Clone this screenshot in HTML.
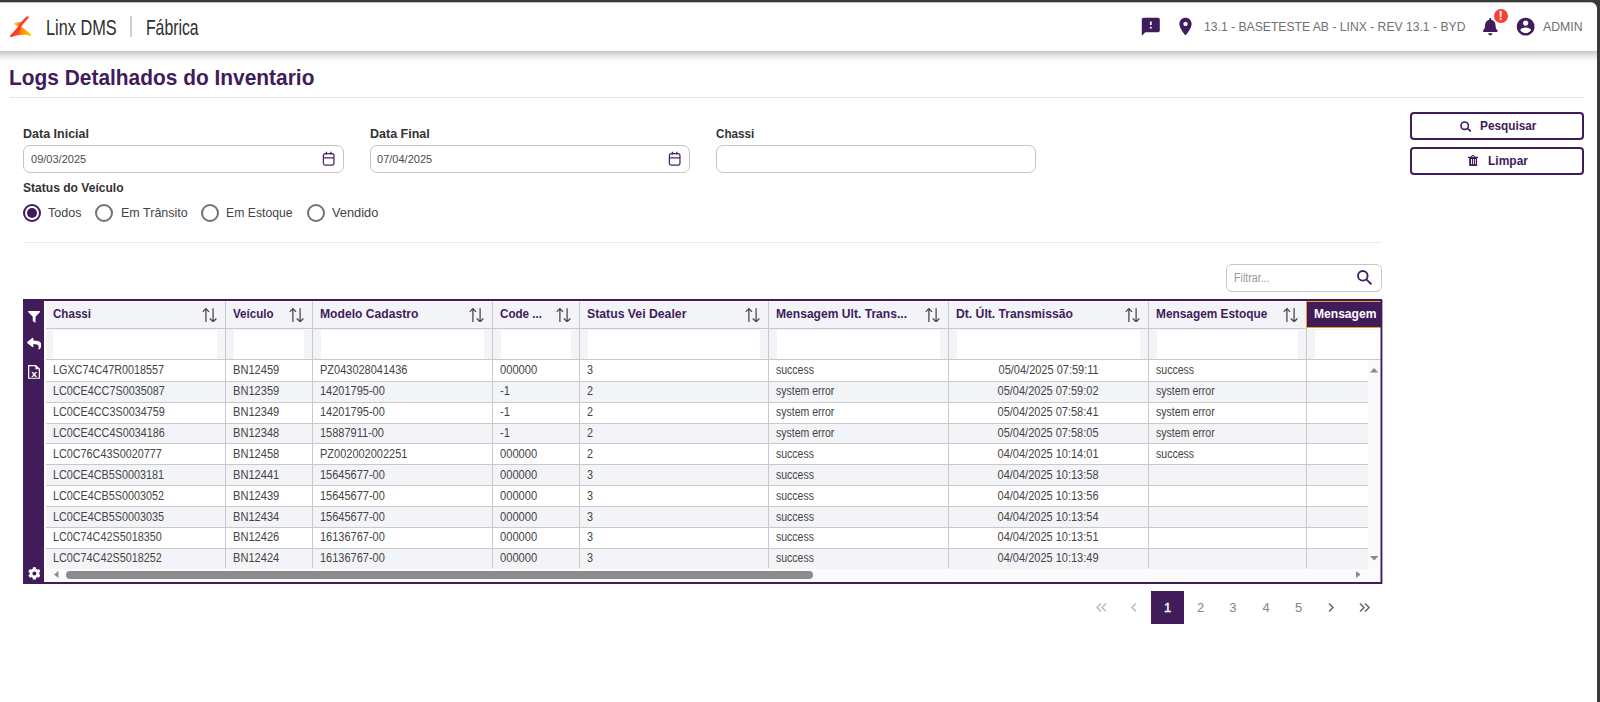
<!DOCTYPE html><html lang="pt-BR"><head><meta charset="utf-8"><title>Logs Detalhados do Inventario</title><style>*{box-sizing:border-box;margin:0;padding:0}
html,body{width:1600px;height:702px;overflow:hidden;background:#fff}
body{font-family:"Liberation Sans",sans-serif;position:relative;color:#444}
.abs{position:absolute}
.frame-top{position:absolute;left:0;top:0;width:1600px;height:3px;background:linear-gradient(#3a3a3a 0,#3a3a3a 66.6%,rgba(58,58,58,.3) 66.7%);z-index:50}
.frame-right{position:absolute;left:1597px;top:0;width:3px;height:702px;background:#3a3a3a;z-index:50}
.frame-corner{position:absolute;left:1590px;top:2px;width:7px;height:7px;z-index:49;background:radial-gradient(circle at 0 100%,rgba(58,58,58,0) 6.500px,#3a3a3a 7.500px)}
.hdr{position:absolute;left:0;top:2px;width:1597px;height:49px;background:#fff;z-index:10}
.hshadow{position:absolute;left:0;top:51px;width:1597px;height:11.500px;background:linear-gradient(#c9c9c9 0,#cdcdcd 8%,#d6d6d6 20%,#e5e5e5 38%,#f2f2f2 60%,#fafafa 80%,#fff 100%);z-index:9}
.sx{display:inline-block;transform-origin:0 50%;white-space:nowrap}
.brand{position:absolute;top:13px;font-size:22px;line-height:26px;color:#2e2e2e;white-space:nowrap}
.sep{position:absolute;left:130px;top:14px;width:2px;height:21px;background:#cfcfcf}
.hinfo{position:absolute;top:17px;font-size:13px;line-height:16px;color:#707070;white-space:nowrap}
.title{position:absolute;left:9px;top:66px;font-size:22px;line-height:24px;transform:scaleX(.95);transform-origin:0 50%;font-weight:bold;color:#401c5b;white-space:nowrap}
.hr1{position:absolute;left:10px;top:97px;width:1574px;height:1px;background:#e6e6e6}
.hr2{position:absolute;left:23px;top:242px;width:1359px;height:1px;background:#ececec}
.lbl{position:absolute;font-size:12.5px;line-height:14px;font-weight:bold;color:#333;white-space:nowrap}
.inp{position:absolute;top:145px;width:321px;height:28px;border:1px solid #c4c4c4;border-radius:7px;background:#fff}
.inp span{position:absolute;left:6.800px;top:6px;font-size:11.5px;line-height:14px;color:#4c4c4c;transform:scaleX(.958);transform-origin:0 50%}
.inp svg{position:absolute;right:8px;top:5px;width:13px;height:15px}
.radio{position:absolute;top:204px;width:18px;height:18px;border:2px solid #727272;border-radius:50%;background:#fff}
.radio.on{border-color:#401c5b}
.radio.on::after{content:"";position:absolute;left:2px;top:2px;width:10px;height:10px;border-radius:50%;background:#401c5b}
.rl{position:absolute;top:205px;font-size:13px;line-height:16px;color:#444;white-space:nowrap;transform:scaleX(.963);transform-origin:0 50%}
.sq{transform:scaleX(.965);transform-origin:0 50%}
.btn{position:absolute;left:1410px;width:174px;height:28px;border:2px solid #401c5b;border-radius:4px;background:#fff;color:#401c5b;font-weight:bold;font-size:12.5px;white-space:nowrap}
.btn svg{position:absolute}
.btn span{position:absolute;top:4.500px;line-height:14px;transform-origin:0 50%}
.filt{position:absolute;left:1226px;top:264px;width:156px;height:28px;border:1px solid #c6c6c6;border-radius:6px;background:#fff}
.filt span{position:absolute;left:6.500px;top:6px;font-size:12.5px;line-height:14px;color:#999;transform:scaleX(.853);transform-origin:0 50%}
.filt svg{position:absolute;left:129px;top:4.300px;width:17px;height:17px}
.grid{position:absolute;left:23px;top:299px;width:1358px;height:285px;background:#fff;border-top:2px solid #401c5b;border-bottom:2px solid #401c5b;overflow:hidden}
.grid>*{margin-top:-2px}
.side{position:absolute;left:0;top:0;width:21px;height:285px;background:#401c5b}
.side svg{position:absolute}
.hc{position:absolute;top:2px;height:28px;border-top:1px solid #fdfdfe;background:#f3f4f8;border-right:1px solid #c9c9c9;border-bottom:1px solid #c9c9c9;overflow:hidden}
.hc .ht{position:absolute;top:5px;font-size:12.5px;line-height:14px;font-weight:bold;color:#401c5b;white-space:nowrap;transform-origin:0 50%}
.hc .sort{position:absolute;right:7.400px;top:5.800px;width:16px;height:14.400px;fill:none;stroke:#4a4a4a;stroke-width:1.300}
.hc.last{background:#401c5b;border:1px solid #f0a020;border-right:none;margin-left:-1px;height:27px;top:2px}
.hc.last .ht{color:#fff;margin-left:0;top:5px}
.fc{position:absolute;top:30px;height:31px;background:#f3f4f8;border-right:1px solid #c9c9c9;border-bottom:1px solid #c9c9c9}
.fi{position:absolute;right:8px;top:1px;bottom:.5px;background:#fff}
.row{position:absolute;left:0;width:1345px;overflow:hidden;height:21px}
.row.alt .c{background:#f3f4f8}
.c{position:absolute;top:0;height:100%;border-right:1px solid #c9c9c9;border-bottom:1px solid #c9c9c9;background:#fff;font-size:12px;color:#444;white-space:nowrap;overflow:hidden}
.c span{display:inline-block;transform-origin:0 50%}
.c.ctr{text-align:center}
.c.ctr span{transform-origin:50% 50%}
.row.lastr .c{border-bottom-color:transparent}
.pg{position:absolute;top:590.500px;width:33px;height:33px;line-height:33px;text-align:center;font-size:13px;color:#858585}
.pg.on{background:#401c5b;color:#fff;-webkit-text-stroke:.35px #fff}
.pg svg{position:absolute;left:9px;top:10px;width:14px;height:13px;fill:none;stroke-width:1.5}
.rb0{position:absolute;left:1380px;top:301px;width:1px;height:281px;background:rgba(64,28,91,.5)}
.rb1{position:absolute;left:1381px;top:299px;width:1px;height:285px;background:#401c5b}
.rb2{position:absolute;left:1382px;top:300px;width:1px;height:284px;background:rgba(64,28,91,.4)}
</style></head><body>
<div class="frame-top"></div><div class="frame-right"></div><div class="frame-corner"></div>
<div class="hshadow"></div>
<div class="hdr">
<svg class="abs" style="left:5px;top:8px" width="35" height="32" viewBox="0 0 768 702"><defs><linearGradient id="lgA" gradientUnits="userSpaceOnUse" x1="215" y1="0" x2="350" y2="0"><stop offset="0" stop-color="#ffc400"/><stop offset=".45" stop-color="#ffa600"/><stop offset="1" stop-color="#ff5a1a"/></linearGradient><linearGradient id="lgB" gradientUnits="userSpaceOnUse" x1="280" y1="0" x2="575" y2="0"><stop offset="0" stop-color="#ff4a20"/><stop offset=".3" stop-color="#ff8a00"/><stop offset=".8" stop-color="#ffbe00"/><stop offset="1" stop-color="#ffd000"/></linearGradient></defs>
<path d="M210 288 C250 274 300 272 352 258 L318 382 C284 368 240 340 214 318 C202 308 200 293 210 288 Z" fill="url(#lgA)"/>
<path d="M350 368 C420 412 500 470 566 528 C580 542 578 566 560 570 C470 536 330 520 130 594 L300 420 Z" fill="url(#lgB)"/>
<path d="M466 150 C490 124 534 142 518 170 C474 232 398 290 356 368 C340 440 300 500 200 564 C170 582 140 596 124 590 C102 580 110 556 122 546 C190 480 250 410 298 350 C330 290 400 216 466 150 Z" fill="#ff3b26"/></svg>
<div class="brand" style="left:45.500px"><span class="sx" style="transform:scaleX(.742)">Linx DMS</span></div>
<div class="sep"></div>
<div class="brand" style="left:146px"><span class="sx" style="transform:scaleX(.716)">Fábrica</span></div>
<svg class="abs" style="left:1140.300px;top:14.100px" width="21.600" height="21.600" viewBox="0 0 24 24"><path fill="#401c5b" d="M20 2H4c-1.100 0-2 .9-2 2v18l4-4h14c1.100 0 2-.9 2-2V4c0-1.100-.9-2-2-2zm-7 12h-2v-2h2v2zm0-4h-2V6h2v4z"/></svg>
<svg class="abs" style="left:1175.400px;top:14.150px" width="21" height="21" viewBox="0 0 24 24"><path fill="#401c5b" d="M12 2C8.130 2 5 5.130 5 9c0 5.250 7 13 7 13s7-7.750 7-13c0-3.870-3.130-7-7-7zm0 9.500c-1.380 0-2.500-1.120-2.500-2.500s1.120-2.500 2.500-2.500 2.500 1.120 2.500 2.500-1.120 2.500-2.500 2.500z"/></svg>
<div class="hinfo" style="left:1204px"><span class="sx" style="transform:scaleX(.935)">13.1 - BASETESTE AB - LINX - REV 13.1 - BYD</span></div>
<svg class="abs" style="left:1483px;top:16.400px" width="14.600" height="17.300" viewBox="0 0 448 512" preserveAspectRatio="none"><path fill="#401c5b" d="M224 512c35.320 0 63.970-28.650 63.970-64H160.030c0 35.350 28.650 64 63.970 64zm215.390-149.710c-19.320-20.760-55.470-51.990-55.470-154.290 0-77.700-54.480-139.900-127.940-155.160V32c0-17.670-14.320-32-31.980-32s-31.980 14.330-31.980 32v20.840C118.560 68.100 64.080 130.300 64.080 208c0 102.300-36.150 133.530-55.470 154.290-6 6.450-8.660 14.160-8.610 21.710.110 16.400 12.980 32 32.100 32h383.800c19.120 0 32-15.600 32.100-32 .05-7.550-2.610-15.270-8.610-21.710z"/></svg>
<div class="abs" style="left:1493.700px;top:6.900px;width:14.100px;height:14.100px;border-radius:50%;background:#f44336;color:#fff;font-size:12px;font-weight:bold;line-height:14px;text-align:center">!</div>
<svg class="abs" style="left:1514.700px;top:14px" width="21.300" height="21.300" viewBox="0 0 24 24"><path fill="#401c5b" d="M12 2C6.480 2 2 6.480 2 12s4.480 10 10 10 10-4.480 10-10S17.520 2 12 2zm0 3c1.660 0 3 1.340 3 3s-1.340 3-3 3-3-1.340-3-3 1.340-3 3-3zm0 14.200c-2.500 0-4.710-1.280-6-3.220.030-1.990 4-3.080 6-3.080 1.990 0 5.970 1.090 6 3.080-1.290 1.940-3.500 3.220-6 3.220z"/></svg>
<div class="hinfo" style="left:1542.500px"><span class="sx" style="transform:scaleX(.945)">ADMIN</span></div>
</div>
<div class="title">Logs Detalhados do Inventario</div>
<div class="hr1"></div>
<div class="lbl" style="left:23px;top:127px">Data Inicial</div>
<div class="lbl" style="left:370px;top:127px">Data Final</div>
<div class="lbl" style="left:716px;top:127px;transform:scaleX(.93);transform-origin:0 50%">Chassi</div>
<div class="inp" style="left:23px"><span>09/03/2025</span><svg viewBox="0 0 13 15"><path fill="none" stroke="#46256a" stroke-width="1.250" d="M3.200 2.700h6.950a1.800 1.800 0 0 1 1.800 1.800v7.700a1.800 1.800 0 0 1-1.800 1.800H3.200a1.800 1.800 0 0 1-1.800-1.800V4.500a1.800 1.800 0 0 1 1.800-1.800zM1.400 6.800h10.550M4.400 .7v3M8.900 .7v3"/></svg></div>
<div class="inp" style="left:369.500px;width:320.500px"><span>07/04/2025</span><svg viewBox="0 0 13 15"><path fill="none" stroke="#46256a" stroke-width="1.250" d="M3.200 2.700h6.950a1.800 1.800 0 0 1 1.800 1.800v7.700a1.800 1.800 0 0 1-1.800 1.800H3.200a1.800 1.800 0 0 1-1.800-1.800V4.500a1.800 1.800 0 0 1 1.800-1.800zM1.400 6.800h10.550M4.400 .7v3M8.900 .7v3"/></svg></div>
<div class="inp" style="left:716px;width:320px"></div>
<div class="lbl sq" style="left:23px;top:180.500px">Status do Veículo</div>
<div class="radio on" style="left:23px"></div><div class="rl" style="left:48px">Todos</div>
<div class="radio" style="left:95px"></div><div class="rl" style="left:121px">Em Trânsito</div>
<div class="radio" style="left:201px"></div><div class="rl" style="left:226px;transform:scaleX(.94)">Em Estoque</div>
<div class="radio" style="left:307px"></div><div class="rl" style="left:331.500px;transform:scaleX(.985)">Vendido</div>
<div class="hr2"></div>
<div class="btn" style="top:112px"><svg style="left:47.600px;top:6.800px" width="11.600" height="11" viewBox="0 0 11.600 11"><circle cx="4.700" cy="4.700" r="3.700" fill="none" stroke="#401c5b" stroke-width="1.600"/><path d="M7.400 7.400l3.600 3" stroke="#401c5b" stroke-width="1.700"/></svg><span style="left:67.500px;transform:scaleX(.945)">Pesquisar</span></div>
<div class="btn" style="top:147px"><svg style="left:56px;top:5.800px" width="10" height="11.200" viewBox="0 0 10 11.200"><path fill="#401c5b" fill-rule="evenodd" d="M0 1.700h10v1.300H0zM1.200 3h7.900v7.200a1 1 0 0 1-1 1H2.200a1 1 0 0 1-1-1zM3 4v5.200h.9V4zm2.100 0v5.200H6V4zm2 0v5.200h.8V4z"/><path fill="none" stroke="#401c5b" stroke-width="1" d="M3.300 1.900c0-1.900 3.400-1.900 3.400 0"/></svg><span style="left:75.500px;transform:scaleX(.96)">Limpar</span></div>
<div class="filt"><span>Filtrar...</span><svg viewBox="0 0 17 17"><circle cx="6.800" cy="6.800" r="4.800" fill="none" stroke="#401c5b" stroke-width="1.800"/><path d="M10.400 10.400l5 5" stroke="#401c5b" stroke-width="1.900"/></svg></div>

<div class="grid">
<div class="side"><svg style="left:4.700px;top:12.300px" width="12.300" height="11.500" viewBox="0 0 14 13" preserveAspectRatio="none"><path fill="#fff" d="M.6 0h12.800c.5 0 .8.600.4 1L8.600 6.500V12.400c0 .5-.5.700-.9.500l-2-1.400a.7.700 0 0 1-.3-.6V6.500L.2 1C-.2.600.1 0 .6 0z"/></svg>
<svg style="left:3.800px;top:38.200px" width="14.500" height="13.400" viewBox="0 0 512 512" preserveAspectRatio="none"><path fill="#fff" d="M8.310 189.900l176-152c15.410-13.300 39.690-2.500 39.690 18.200v80.050c160.600 1.800 288 34 288 186.300 0 61.440-39.590 122.300-83.340 154.100-13.660 9.900-33.110-2.500-28.080-18.600 45.340-145-21.500-183.500-176.600-185.800v87.920c0 20.700-24.310 31.450-39.690 18.160l-176-152c-11.070-9.540-11.080-26.730.02-36.330z"/></svg>
<svg style="left:5.200px;top:66.300px" width="12" height="13.800" viewBox="0 0 13 16" preserveAspectRatio="none"><path fill="none" stroke="#fff" stroke-width="1.300" d="M.7.700h7.600l4 4v10.600H.7z"/><path fill="#fff" d="M8 0l5 5H8z"/><text x="6.600" y="14" font-family="Liberation Sans,sans-serif" font-weight="bold" font-size="11.500" fill="#fff" text-anchor="middle">x</text></svg>
<svg style="left:4.700px;top:267.800px" width="12.800" height="12.800" viewBox="0 0 512 512"><path fill="#fff" d="M487.400 315.700l-42.600-24.600c4.300-23.200 4.300-47 0-70.200l42.600-24.600c4.900-2.800 7.100-8.600 5.500-14-11.100-35.600-30-67.800-54.700-94.600-3.800-4.100-10-5.100-14.800-2.300L380.800 110c-17.900-15.400-38.500-27.300-60.800-35.100V25.800c0-5.600-3.900-10.500-9.400-11.700-36.700-8.200-74.300-7.800-109.200 0-5.500 1.200-9.400 6.100-9.400 11.700V75c-22.200 7.900-42.800 19.800-60.800 35.100L88.700 85.500c-4.900-2.800-11-1.900-14.800 2.300-24.700 26.700-43.600 58.900-54.700 94.600-1.700 5.400.6 11.200 5.500 14L67.300 221c-4.300 23.200-4.300 47 0 70.200l-42.600 24.600c-4.900 2.800-7.100 8.600-5.500 14 11.100 35.600 30 67.800 54.700 94.600 3.800 4.100 10 5.100 14.800 2.300l42.600-24.600c17.900 15.400 38.500 27.300 60.800 35.100v49.200c0 5.600 3.900 10.500 9.400 11.700 36.700 8.200 74.300 7.800 109.200 0 5.500-1.200 9.400-6.100 9.400-11.700v-49.200c22.200-7.900 42.800-19.800 60.800-35.100l42.600 24.600c4.900 2.800 11 1.900 14.800-2.300 24.700-26.700 43.600-58.900 54.700-94.600 1.500-5.500-.7-11.300-5.600-14.100zM256 336c-44.100 0-80-35.900-80-80s35.900-80 80-80 80 35.900 80 80-35.900 80-80 80z"/></svg>
</div>
<div class="hc" style="left:23px;width:180px"><span class="ht" style="left:7px;transform:scaleX(0.927)">Chassi</span><svg class="sort" viewBox="0 0 16 14.4"><path d="M3.900 14.200V.7M.8 3.900L3.900 .6l3.100 3.300M11.100 .3V13.700M7.800 10.500l3.300 3.300 3.300-3.300"/></svg></div>
<div class="fc" style="left:23px;width:180px"><div class="fi" style="left:7px"></div></div>
<div class="hc" style="left:203px;width:87px"><span class="ht" style="left:7px;transform:scaleX(0.926)">Veículo</span><svg class="sort" viewBox="0 0 16 14.4"><path d="M3.900 14.200V.7M.8 3.900L3.900 .6l3.100 3.300M11.100 .3V13.700M7.800 10.500l3.300 3.300 3.300-3.300"/></svg></div>
<div class="fc" style="left:203px;width:87px"><div class="fi" style="left:8px"></div></div>
<div class="hc" style="left:290px;width:180px"><span class="ht" style="left:7px;transform:scaleX(0.97)">Modelo Cadastro</span><svg class="sort" viewBox="0 0 16 14.4"><path d="M3.900 14.200V.7M.8 3.900L3.900 .6l3.100 3.300M11.100 .3V13.700M7.800 10.500l3.300 3.300 3.300-3.300"/></svg></div>
<div class="fc" style="left:290px;width:180px"><div class="fi" style="left:8px"></div></div>
<div class="hc" style="left:470px;width:87px"><span class="ht" style="left:7px;transform:scaleX(0.928)">Code ...</span><svg class="sort" viewBox="0 0 16 14.4"><path d="M3.900 14.200V.7M.8 3.900L3.900 .6l3.100 3.300M11.100 .3V13.700M7.800 10.500l3.300 3.300 3.300-3.300"/></svg></div>
<div class="fc" style="left:470px;width:87px"><div class="fi" style="left:8px"></div></div>
<div class="hc" style="left:557px;width:189px"><span class="ht" style="left:7px;transform:scaleX(0.98)">Status Vei Dealer</span><svg class="sort" viewBox="0 0 16 14.4"><path d="M3.900 14.200V.7M.8 3.900L3.900 .6l3.100 3.300M11.100 .3V13.700M7.800 10.500l3.300 3.300 3.300-3.300"/></svg></div>
<div class="fc" style="left:557px;width:189px"><div class="fi" style="left:8px"></div></div>
<div class="hc" style="left:746px;width:180px"><span class="ht" style="left:7px;transform:scaleX(0.967)">Mensagem Ult. Trans...</span><svg class="sort" viewBox="0 0 16 14.4"><path d="M3.900 14.200V.7M.8 3.900L3.900 .6l3.100 3.300M11.100 .3V13.700M7.800 10.500l3.300 3.300 3.300-3.300"/></svg></div>
<div class="fc" style="left:746px;width:180px"><div class="fi" style="left:8px"></div></div>
<div class="hc" style="left:926px;width:200px"><span class="ht" style="left:7px;transform:scaleX(0.973)">Dt. Últ. Transmissão</span><svg class="sort" viewBox="0 0 16 14.4"><path d="M3.900 14.200V.7M.8 3.900L3.900 .6l3.100 3.300M11.100 .3V13.700M7.800 10.500l3.300 3.300 3.300-3.300"/></svg></div>
<div class="fc" style="left:926px;width:200px"><div class="fi" style="left:8px"></div></div>
<div class="hc" style="left:1126px;width:158px"><span class="ht" style="left:7px;transform:scaleX(0.949)">Mensagem Estoque</span><svg class="sort" viewBox="0 0 16 14.4"><path d="M3.900 14.200V.7M.8 3.900L3.900 .6l3.100 3.300M11.100 .3V13.700M7.800 10.500l3.300 3.300 3.300-3.300"/></svg></div>
<div class="fc" style="left:1126px;width:158px"><div class="fi" style="left:8px"></div></div>
<div class="hc last" style="left:1284px;width:150px"><span class="ht" style="left:7px;transform:scaleX(0.966)">Mensagem</span></div>
<div class="fc" style="left:1284px;width:150px"><div class="fi" style="left:8px"></div></div>
<div class="row" style="top:61px;height:22px;line-height:21px">
<div class="c" style="left:23px;width:180px"><span style="margin-left:7px;transform:scaleX(0.9)">LGXC74C47R0018557</span></div>
<div class="c" style="left:203px;width:87px"><span style="margin-left:7px;transform:scaleX(0.925)">BN12459</span></div>
<div class="c" style="left:290px;width:180px"><span style="margin-left:7px;transform:scaleX(0.916)">PZ043028041436</span></div>
<div class="c" style="left:470px;width:87px"><span style="margin-left:7px;transform:scaleX(0.93)">000000</span></div>
<div class="c" style="left:557px;width:189px"><span style="margin-left:7px;transform:scaleX(0.9)">3</span></div>
<div class="c" style="left:746px;width:180px"><span style="margin-left:7px;transform:scaleX(0.875)">success</span></div>
<div class="c ctr" style="left:926px;width:200px"><span style="transform:scaleX(0.917)">05/04/2025 07:59:11</span></div>
<div class="c" style="left:1126px;width:158px"><span style="margin-left:7px;transform:scaleX(0.88)">success</span></div>
<div class="c" style="left:1284px;width:150px"><span style="margin-left:7px;transform:scaleX(0.9)"></span></div>
</div>
<div class="row alt" style="top:83px;height:21px;line-height:18px">
<div class="c" style="left:23px;width:180px"><span style="margin-left:7px;transform:scaleX(0.9)">LC0CE4CC7S0035087</span></div>
<div class="c" style="left:203px;width:87px"><span style="margin-left:7px;transform:scaleX(0.925)">BN12359</span></div>
<div class="c" style="left:290px;width:180px"><span style="margin-left:7px;transform:scaleX(0.916)">14201795-00</span></div>
<div class="c" style="left:470px;width:87px"><span style="margin-left:7px;transform:scaleX(0.93)">-1</span></div>
<div class="c" style="left:557px;width:189px"><span style="margin-left:7px;transform:scaleX(0.9)">2</span></div>
<div class="c" style="left:746px;width:180px"><span style="margin-left:7px;transform:scaleX(0.875)">system error</span></div>
<div class="c ctr" style="left:926px;width:200px"><span style="transform:scaleX(0.917)">05/04/2025 07:59:02</span></div>
<div class="c" style="left:1126px;width:158px"><span style="margin-left:7px;transform:scaleX(0.88)">system error</span></div>
<div class="c" style="left:1284px;width:150px"><span style="margin-left:7px;transform:scaleX(0.9)"></span></div>
</div>
<div class="row" style="top:104px;height:21px;line-height:18px">
<div class="c" style="left:23px;width:180px"><span style="margin-left:7px;transform:scaleX(0.9)">LC0CE4CC3S0034759</span></div>
<div class="c" style="left:203px;width:87px"><span style="margin-left:7px;transform:scaleX(0.925)">BN12349</span></div>
<div class="c" style="left:290px;width:180px"><span style="margin-left:7px;transform:scaleX(0.916)">14201795-00</span></div>
<div class="c" style="left:470px;width:87px"><span style="margin-left:7px;transform:scaleX(0.93)">-1</span></div>
<div class="c" style="left:557px;width:189px"><span style="margin-left:7px;transform:scaleX(0.9)">2</span></div>
<div class="c" style="left:746px;width:180px"><span style="margin-left:7px;transform:scaleX(0.875)">system error</span></div>
<div class="c ctr" style="left:926px;width:200px"><span style="transform:scaleX(0.917)">05/04/2025 07:58:41</span></div>
<div class="c" style="left:1126px;width:158px"><span style="margin-left:7px;transform:scaleX(0.88)">system error</span></div>
<div class="c" style="left:1284px;width:150px"><span style="margin-left:7px;transform:scaleX(0.9)"></span></div>
</div>
<div class="row alt" style="top:125px;height:20px;line-height:19px">
<div class="c" style="left:23px;width:180px"><span style="margin-left:7px;transform:scaleX(0.9)">LC0CE4CC4S0034186</span></div>
<div class="c" style="left:203px;width:87px"><span style="margin-left:7px;transform:scaleX(0.925)">BN12348</span></div>
<div class="c" style="left:290px;width:180px"><span style="margin-left:7px;transform:scaleX(0.916)">15887911-00</span></div>
<div class="c" style="left:470px;width:87px"><span style="margin-left:7px;transform:scaleX(0.93)">-1</span></div>
<div class="c" style="left:557px;width:189px"><span style="margin-left:7px;transform:scaleX(0.9)">2</span></div>
<div class="c" style="left:746px;width:180px"><span style="margin-left:7px;transform:scaleX(0.875)">system error</span></div>
<div class="c ctr" style="left:926px;width:200px"><span style="transform:scaleX(0.917)">05/04/2025 07:58:05</span></div>
<div class="c" style="left:1126px;width:158px"><span style="margin-left:7px;transform:scaleX(0.88)">system error</span></div>
<div class="c" style="left:1284px;width:150px"><span style="margin-left:7px;transform:scaleX(0.9)"></span></div>
</div>
<div class="row" style="top:145px;height:21px;line-height:20px">
<div class="c" style="left:23px;width:180px"><span style="margin-left:7px;transform:scaleX(0.9)">LC0C76C43S0020777</span></div>
<div class="c" style="left:203px;width:87px"><span style="margin-left:7px;transform:scaleX(0.925)">BN12458</span></div>
<div class="c" style="left:290px;width:180px"><span style="margin-left:7px;transform:scaleX(0.916)">PZ002002002251</span></div>
<div class="c" style="left:470px;width:87px"><span style="margin-left:7px;transform:scaleX(0.93)">000000</span></div>
<div class="c" style="left:557px;width:189px"><span style="margin-left:7px;transform:scaleX(0.9)">2</span></div>
<div class="c" style="left:746px;width:180px"><span style="margin-left:7px;transform:scaleX(0.875)">success</span></div>
<div class="c ctr" style="left:926px;width:200px"><span style="transform:scaleX(0.917)">04/04/2025 10:14:01</span></div>
<div class="c" style="left:1126px;width:158px"><span style="margin-left:7px;transform:scaleX(0.88)">success</span></div>
<div class="c" style="left:1284px;width:150px"><span style="margin-left:7px;transform:scaleX(0.9)"></span></div>
</div>
<div class="row alt" style="top:166px;height:21px;line-height:20px">
<div class="c" style="left:23px;width:180px"><span style="margin-left:7px;transform:scaleX(0.9)">LC0CE4CB5S0003181</span></div>
<div class="c" style="left:203px;width:87px"><span style="margin-left:7px;transform:scaleX(0.925)">BN12441</span></div>
<div class="c" style="left:290px;width:180px"><span style="margin-left:7px;transform:scaleX(0.916)">15645677-00</span></div>
<div class="c" style="left:470px;width:87px"><span style="margin-left:7px;transform:scaleX(0.93)">000000</span></div>
<div class="c" style="left:557px;width:189px"><span style="margin-left:7px;transform:scaleX(0.9)">3</span></div>
<div class="c" style="left:746px;width:180px"><span style="margin-left:7px;transform:scaleX(0.875)">success</span></div>
<div class="c ctr" style="left:926px;width:200px"><span style="transform:scaleX(0.917)">04/04/2025 10:13:58</span></div>
<div class="c" style="left:1126px;width:158px"><span style="margin-left:7px;transform:scaleX(0.88)"></span></div>
<div class="c" style="left:1284px;width:150px"><span style="margin-left:7px;transform:scaleX(0.9)"></span></div>
</div>
<div class="row" style="top:187px;height:21px;line-height:20px">
<div class="c" style="left:23px;width:180px"><span style="margin-left:7px;transform:scaleX(0.9)">LC0CE4CB5S0003052</span></div>
<div class="c" style="left:203px;width:87px"><span style="margin-left:7px;transform:scaleX(0.925)">BN12439</span></div>
<div class="c" style="left:290px;width:180px"><span style="margin-left:7px;transform:scaleX(0.916)">15645677-00</span></div>
<div class="c" style="left:470px;width:87px"><span style="margin-left:7px;transform:scaleX(0.93)">000000</span></div>
<div class="c" style="left:557px;width:189px"><span style="margin-left:7px;transform:scaleX(0.9)">3</span></div>
<div class="c" style="left:746px;width:180px"><span style="margin-left:7px;transform:scaleX(0.875)">success</span></div>
<div class="c ctr" style="left:926px;width:200px"><span style="transform:scaleX(0.917)">04/04/2025 10:13:56</span></div>
<div class="c" style="left:1126px;width:158px"><span style="margin-left:7px;transform:scaleX(0.88)"></span></div>
<div class="c" style="left:1284px;width:150px"><span style="margin-left:7px;transform:scaleX(0.9)"></span></div>
</div>
<div class="row alt" style="top:208px;height:21px;line-height:20px">
<div class="c" style="left:23px;width:180px"><span style="margin-left:7px;transform:scaleX(0.9)">LC0CE4CB5S0003035</span></div>
<div class="c" style="left:203px;width:87px"><span style="margin-left:7px;transform:scaleX(0.925)">BN12434</span></div>
<div class="c" style="left:290px;width:180px"><span style="margin-left:7px;transform:scaleX(0.916)">15645677-00</span></div>
<div class="c" style="left:470px;width:87px"><span style="margin-left:7px;transform:scaleX(0.93)">000000</span></div>
<div class="c" style="left:557px;width:189px"><span style="margin-left:7px;transform:scaleX(0.9)">3</span></div>
<div class="c" style="left:746px;width:180px"><span style="margin-left:7px;transform:scaleX(0.875)">success</span></div>
<div class="c ctr" style="left:926px;width:200px"><span style="transform:scaleX(0.917)">04/04/2025 10:13:54</span></div>
<div class="c" style="left:1126px;width:158px"><span style="margin-left:7px;transform:scaleX(0.88)"></span></div>
<div class="c" style="left:1284px;width:150px"><span style="margin-left:7px;transform:scaleX(0.9)"></span></div>
</div>
<div class="row" style="top:229px;height:21px;line-height:18px">
<div class="c" style="left:23px;width:180px"><span style="margin-left:7px;transform:scaleX(0.9)">LC0C74C42S5018350</span></div>
<div class="c" style="left:203px;width:87px"><span style="margin-left:7px;transform:scaleX(0.925)">BN12426</span></div>
<div class="c" style="left:290px;width:180px"><span style="margin-left:7px;transform:scaleX(0.916)">16136767-00</span></div>
<div class="c" style="left:470px;width:87px"><span style="margin-left:7px;transform:scaleX(0.93)">000000</span></div>
<div class="c" style="left:557px;width:189px"><span style="margin-left:7px;transform:scaleX(0.9)">3</span></div>
<div class="c" style="left:746px;width:180px"><span style="margin-left:7px;transform:scaleX(0.875)">success</span></div>
<div class="c ctr" style="left:926px;width:200px"><span style="transform:scaleX(0.917)">04/04/2025 10:13:51</span></div>
<div class="c" style="left:1126px;width:158px"><span style="margin-left:7px;transform:scaleX(0.88)"></span></div>
<div class="c" style="left:1284px;width:150px"><span style="margin-left:7px;transform:scaleX(0.9)"></span></div>
</div>
<div class="row alt lastr" style="top:250px;height:20px;line-height:19px">
<div class="c" style="left:23px;width:180px"><span style="margin-left:7px;transform:scaleX(0.9)">LC0C74C42S5018252</span></div>
<div class="c" style="left:203px;width:87px"><span style="margin-left:7px;transform:scaleX(0.925)">BN12424</span></div>
<div class="c" style="left:290px;width:180px"><span style="margin-left:7px;transform:scaleX(0.916)">16136767-00</span></div>
<div class="c" style="left:470px;width:87px"><span style="margin-left:7px;transform:scaleX(0.93)">000000</span></div>
<div class="c" style="left:557px;width:189px"><span style="margin-left:7px;transform:scaleX(0.9)">3</span></div>
<div class="c" style="left:746px;width:180px"><span style="margin-left:7px;transform:scaleX(0.875)">success</span></div>
<div class="c ctr" style="left:926px;width:200px"><span style="transform:scaleX(0.917)">04/04/2025 10:13:49</span></div>
<div class="c" style="left:1126px;width:158px"><span style="margin-left:7px;transform:scaleX(0.88)"></span></div>
<div class="c" style="left:1284px;width:150px"><span style="margin-left:7px;transform:scaleX(0.9)"></span></div>
</div>
<div class="abs" style="left:1345px;top:61px;width:13px;height:209px;background:#fafafa"></div>
<svg class="abs" style="left:1346.800px;top:69.300px" width="8.200" height="4.400" viewBox="0 0 9 5" preserveAspectRatio="none"><path d="M0 5L4.500 0 9 5z" fill="#8a8a8a"/></svg>
<svg class="abs" style="left:1346.500px;top:256.500px" width="8.500" height="4.500" viewBox="0 0 9 5" preserveAspectRatio="none"><path d="M0 0L4.500 5 9 0z" fill="#8a8a8a"/></svg>
<div class="abs" style="left:21px;top:270px;width:1337px;height:13px;background:#fbfbfb"></div>
<svg class="abs" style="left:31px;top:272.300px" width="4.500" height="7" viewBox="0 0 5 9" preserveAspectRatio="none"><path d="M5 0L0 4.500 5 9z" fill="#8a8a8a"/></svg>
<svg class="abs" style="left:1332.800px;top:272.300px" width="4.500" height="7" viewBox="0 0 5 9" preserveAspectRatio="none"><path d="M0 0L5 4.500 0 9z" fill="#8a8a8a"/></svg>
<div class="abs" style="left:43px;top:272.200px;width:746.500px;height:7.700px;border-radius:4px;background:#8b8b8b"></div>

</div>
<div class="rb0"></div><div class="rb1"></div><div class="rb2"></div>
<div class="pg" style="left:1085px"><svg viewBox="0 0 14 13" stroke="#bbb"><path d="M7 2.500L3 6.500l4 4M12 2.500L8 6.500l4 4"/></svg></div>
<div class="pg" style="left:1118px"><svg viewBox="0 0 14 13" stroke="#bbb"><path d="M9 2.500L5 6.500l4 4"/></svg></div>
<div class="pg on" style="left:1151px">1</div>
<div class="pg" style="left:1184px">2</div>
<div class="pg" style="left:1216.300px">3</div>
<div class="pg" style="left:1249.500px">4</div>
<div class="pg" style="left:1282px">5</div>
<div class="pg" style="left:1315px"><svg viewBox="0 0 14 13" stroke="#686868"><path d="M5 2.500l4 4-4 4"/></svg></div>
<div class="pg" style="left:1349px"><svg viewBox="0 0 14 13" stroke="#686868"><path d="M2 2.500l4 4-4 4M7 2.500l4 4-4 4"/></svg></div>

</body></html>
